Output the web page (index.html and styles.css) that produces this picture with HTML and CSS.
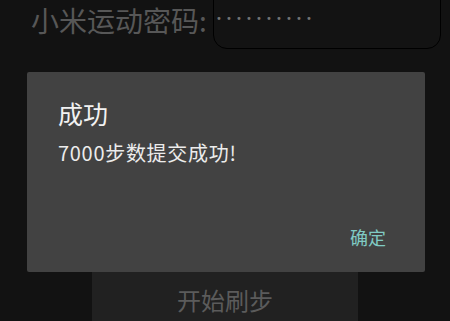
FILE: index.html
```html
<!DOCTYPE html>
<html lang="zh-CN">
<head>
    <meta charset="UTF-8">
    <meta name="viewport" content="width=device-width, initial-scale=1.0">
    <title>刷步</title>
    <link rel="stylesheet" href="styles.css">
</head>
<body>
    <div class="page">
        <div class="row">
            <label class="label">小米运动密码:</label>
            <div class="input"><span class="dots">••••••••••</span></div>
        </div>
        <div class="start">开始刷步</div>
    </div>

    <div class="dialog">
        <div class="title">成功</div>
        <div class="message">7000步数提交成功!</div>
        <div class="actions">
            <span class="ok">确定</span>
        </div>
    </div>
</body>
</html>
```

FILE: styles.css
```css
html, body{
    margin: 0;
    padding: 0;
    background: #121212;
    font-family: "Noto Sans CJK SC", "Noto Sans", sans-serif;
    width: 450px;
    height: 321px;
    overflow: hidden;
}
.page{
    position: relative;
}
.row{
    display: flex;
    align-items: flex-start;
    margin-top: -20px;
    padding-left: 31px;
}
.label{
    color: #575757;
    font-size: 28px;
    line-height: 38px;
    margin-top: 21px;
    width: 182px;
    white-space: nowrap;
}
.input{
    width: 228px;
    height: 69px;
    border: 1px solid #000;
    border-radius: 14px;
    background: #131313;
    box-sizing: border-box;
}
.dots{
    display: block;
    margin-top: 30px;
    margin-left: 2px;
    font-family: "DejaVu Sans", sans-serif;
    font-size: 10px;
    line-height: 16px;
    letter-spacing: 4.1px;
    color: #727272;
}
.start{
    margin: 222px 0 0 92px;
    width: 266px;
    height: 60px;
    background: #212121;
    color: #5b5b5b;
    font-size: 24px;
    line-height: 30px;
    padding-top: 14px;
    box-sizing: border-box;
    text-align: center;
}

/* dialog over the page */
.dialog{
    position: absolute;
    left: 27px;
    top: 72px;
    width: 398px;
    height: 200px;
    background: #424242;
    border-radius: 2px;
    box-sizing: border-box;
    padding: 25px 39px 0 31px;
    display: flex;
    flex-direction: column;
}
.title{
    color: #f2f2f2;
    font-size: 25px;
    line-height: 32px;
}
.message{
    color: #ececec;
    font-size: 20px;
    line-height: 26px;
    letter-spacing: 0.7px;
    margin-top: 11px;
}
.actions{
    display: flex;
    justify-content: flex-end;
    margin-top: 59px;
}
.ok{
    color: #80cbc4;
    font-size: 18px;
    line-height: 24px;
}
```
